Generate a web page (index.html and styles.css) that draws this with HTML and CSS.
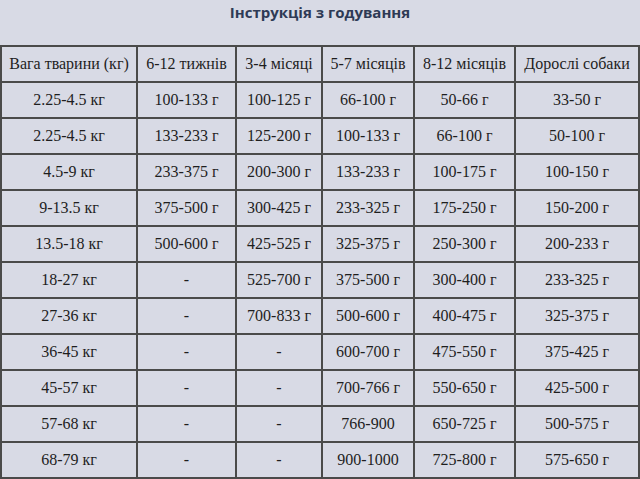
FILE: index.html
```html
<!DOCTYPE html>
<html lang="uk">
<head>
<meta charset="utf-8">
<title>Інструкція з годування</title>
<link rel="stylesheet" href="styles.css">
</head>
<body>
<h2 class="title">Інструкція з годування</h2>
<table class="feed">
  <colgroup>
    <col class="c1"><col class="c2"><col class="c3"><col class="c4"><col class="c5"><col class="c6">
  </colgroup>
  <tr><td>Вага тварини (кг)</td><td>6-12 тижнів</td><td>3-4 місяці</td><td>5-7 місяців</td><td>8-12 місяців</td><td>Дорослі собаки</td></tr>
  <tr><td>2.25-4.5 кг</td><td>100-133 г</td><td>100-125 г</td><td>66-100 г</td><td>50-66 г</td><td>33-50 г</td></tr>
  <tr><td>2.25-4.5 кг</td><td>133-233 г</td><td>125-200 г</td><td>100-133 г</td><td>66-100 г</td><td>50-100 г</td></tr>
  <tr><td>4.5-9 кг</td><td>233-375 г</td><td>200-300 г</td><td>133-233 г</td><td>100-175 г</td><td>100-150 г</td></tr>
  <tr><td>9-13.5 кг</td><td>375-500 г</td><td>300-425 г</td><td>233-325 г</td><td>175-250 г</td><td>150-200 г</td></tr>
  <tr><td>13.5-18 кг</td><td>500-600 г</td><td>425-525 г</td><td>325-375 г</td><td>250-300 г</td><td>200-233 г</td></tr>
  <tr><td>18-27 кг</td><td>-</td><td>525-700 г</td><td>375-500 г</td><td>300-400 г</td><td>233-325 г</td></tr>
  <tr><td>27-36 кг</td><td>-</td><td>700-833 г</td><td>500-600 г</td><td>400-475 г</td><td>325-375 г</td></tr>
  <tr><td>36-45 кг</td><td>-</td><td>-</td><td>600-700 г</td><td>475-550 г</td><td>375-425 г</td></tr>
  <tr><td>45-57 кг</td><td>-</td><td>-</td><td>700-766 г</td><td>550-650 г</td><td>425-500 г</td></tr>
  <tr><td>57-68 кг</td><td>-</td><td>-</td><td>766-900</td><td>650-725 г</td><td>500-575 г</td></tr>
  <tr><td>68-79 кг</td><td>-</td><td>-</td><td>900-1000</td><td>725-800 г</td><td>575-650 г</td></tr>
</table>
</body>
</html>
```
FILE: styles.css
```css
html, body {
  margin: 0;
  padding: 0;
  background: #d8dae5;
}
.title {
  margin: 0;
  height: 45px;
  padding-top: 2px;
  box-sizing: border-box;
  text-align: center;
  font-family: "Open Sans", "Noto Sans", sans-serif;
  font-weight: 700;
  font-size: 15px;
  line-height: 20px;
  color: #2e3a55;
}
.feed {
  width: 640px;
  table-layout: fixed;
  border-collapse: separate;
  border-spacing: 0;
  border: 1px solid #4a4a4a;
  font-family: "Liberation Serif", "Times New Roman", serif;
  font-size: 16px;
  color: #1e1e1e;
}
.feed td {
  border: 1px solid #4a4a4a;
  padding: 8px 2px;
  line-height: 18px;
  text-align: center;
  white-space: nowrap;
}
.c1 { width: 136px; }
.c2 { width: 99px; }
.c3 { width: 86px; }
.c4 { width: 92px; }
.c5 { width: 101px; }
.c6 { width: 124px; }
```
